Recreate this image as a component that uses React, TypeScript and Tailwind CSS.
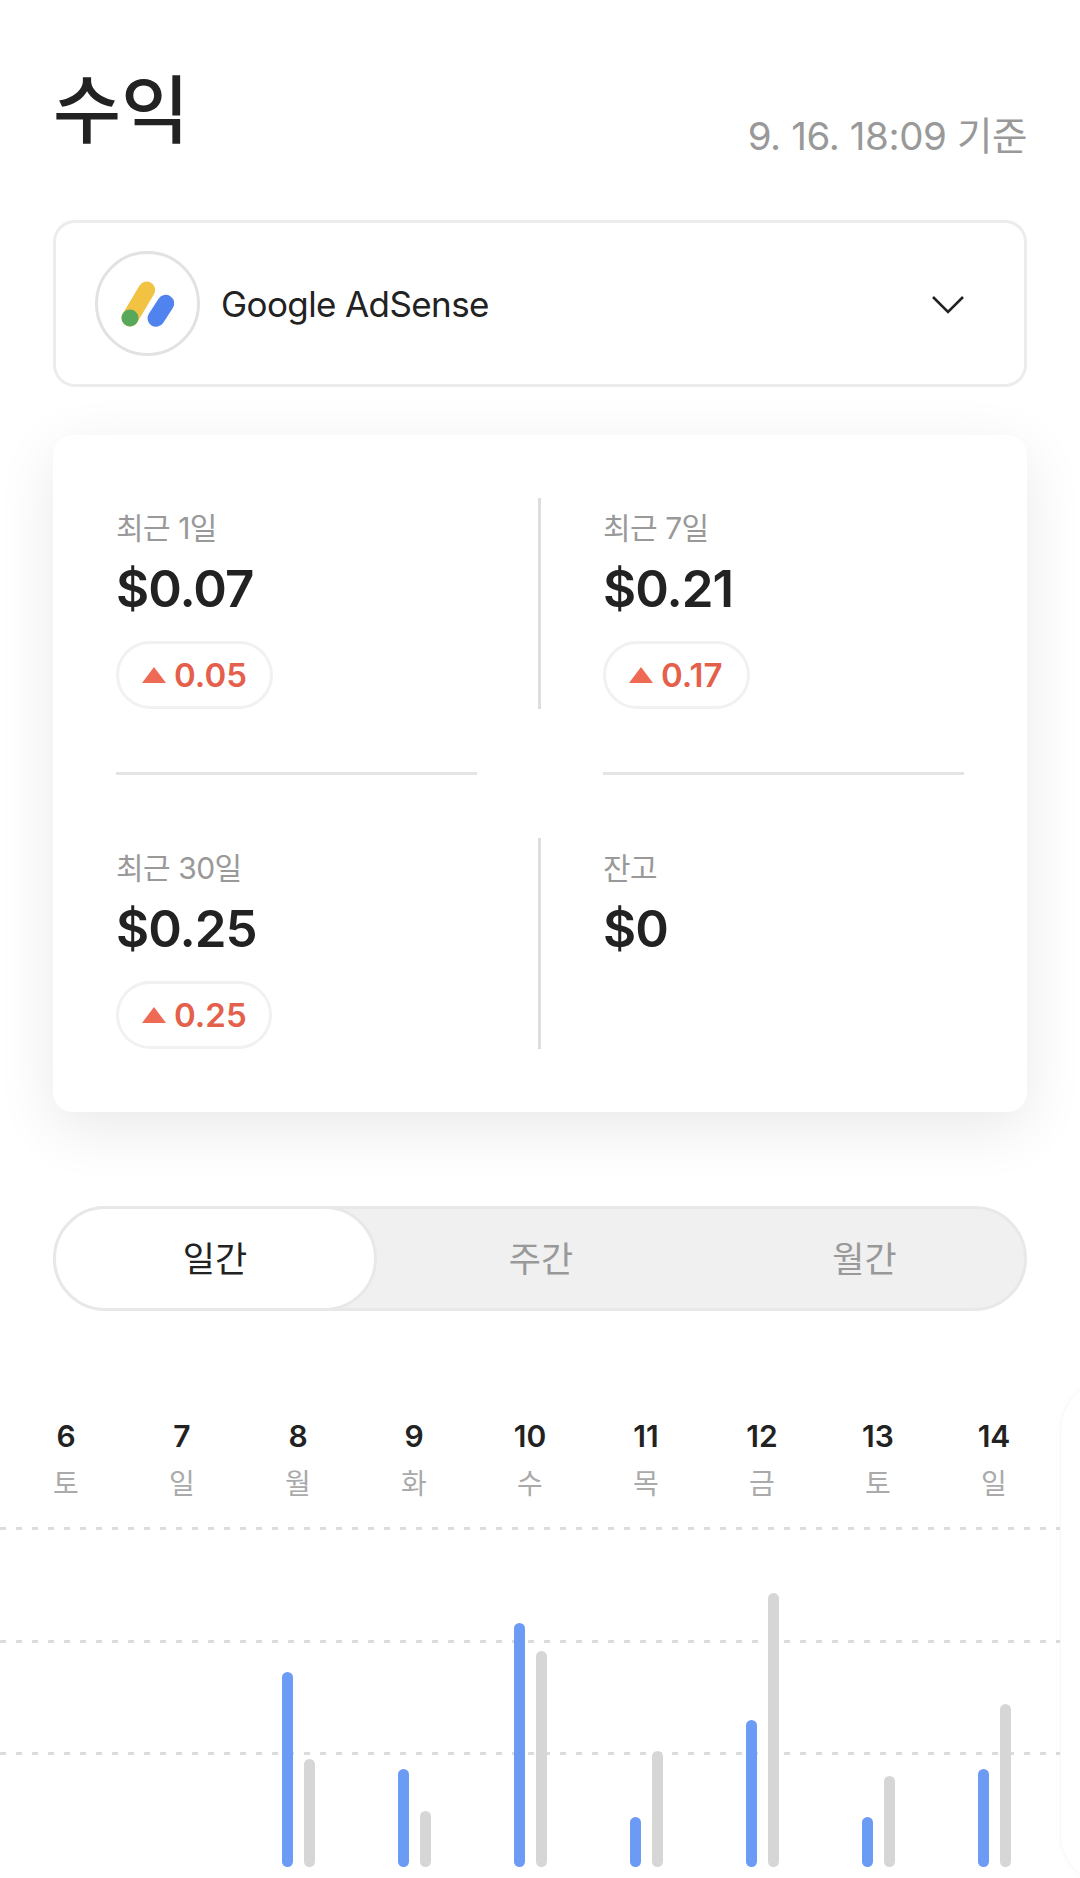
const font = "font-['Inter','Noto_Sans_CJK_KR',sans-serif]";

function Stat({ label, value, delta, pillW }: { label: string; value: string; delta?: string; pillW?: string }) {
  return (
    <div className="h-[211px] flex flex-col items-start">
      <div className="mt-[12px] text-[30px] leading-[36px] text-[#999999] tracking-[-0.5px]">{label}</div>
      <div className="mt-[12px] text-[51px] leading-[62px] font-semibold text-[#222222] tracking-[-1px]">{value}</div>
      {delta && (
        <div className={`mt-auto h-[68px] ${pillW} rounded-full border-[3px] border-[#f1f1f1] flex items-center pl-[23px] gap-[8px]`}>
          <svg width="24" height="16" viewBox="0 0 24 16"><path d="M12 0 L24 16 L0 16 Z" fill="#EE6A55" /></svg>
          <span className="text-[33px] leading-none font-semibold text-[#E4604C]">{delta}</span>
        </div>
      )}
    </div>
  );
}

const days = [
  { d: "6", w: "토", b: 0, g: 0 },
  { d: "7", w: "일", b: 0, g: 0 },
  { d: "8", w: "월", b: 195, g: 108 },
  { d: "9", w: "화", b: 98, g: 56 },
  { d: "10", w: "수", b: 244, g: 216 },
  { d: "11", w: "목", b: 50, g: 116 },
  { d: "12", w: "금", b: 147, g: 274 },
  { d: "13", w: "토", b: 50, g: 91 },
  { d: "14", w: "일", b: 98, g: 163 },
];

function DotLine() {
  return <div className="h-[3px] w-full bg-[repeating-linear-gradient(90deg,#dcdcdc_0,#dcdcdc_6px,transparent_6px,transparent_16px)]" />;
}

export default function App() {
  return (
    <div className={`${font} relative w-[1080px] h-[1878px] overflow-hidden bg-white`}>
      <div className="px-[53px] pt-[64px]">
        <div className="flex items-end justify-between h-[92px]">
          <h1 className="text-[74px] leading-[92px] font-medium text-[#222222]">수익</h1>
          <span className="text-[38.5px] leading-[44px] text-[#999999] tracking-[-0.4px] mb-[-2px]">9. 16. 18:09 기준</span>
        </div>

        <div className="mt-[64px] h-[167px] rounded-[22px] border-[3px] border-[#ececec] flex items-center pl-[39px] pr-[59px]">
          <div className="w-[105px] h-[105px] rounded-full border-[3px] border-[#e2e2e2] shrink-0">
            <svg width="99" height="99" viewBox="2 2 99 99">
              <line x1="50.7" y1="38" x2="34" y2="66" stroke="#F2C342" strokeWidth="17" strokeLinecap="round" />
              <line x1="69.7" y1="51.3" x2="60" y2="66.3" stroke="#5083EE" strokeWidth="17" strokeLinecap="round" />
              <circle cx="34" cy="66" r="8.5" fill="#57A85A" />
            </svg>
          </div>
          <span className="ml-[21px] mt-[2px] text-[35px] leading-none text-[#222222] tracking-[-0.6px]">Google AdSense</span>
          <svg className="ml-auto mt-[2px]" width="34" height="20" viewBox="0 0 34 20" fill="none">
            <path d="M2 2 L17 17 L32 2" stroke="#222222" strokeWidth="2.6" />
          </svg>
        </div>

        <div className="mt-[48px] h-[677px] rounded-[20px] bg-white shadow-[0_16px_60px_rgba(0,0,0,0.09)] px-[63px] pt-[63px]">
          <div className="grid grid-cols-[361px_126px_361px]">
            <Stat label="최근 1일" value="$0.07" delta="0.05" pillW="w-[157px]" />
            <div className="flex justify-center pr-[1px]"><div className="w-[3px] h-[211px] bg-[#dddddd]" /></div>
            <Stat label="최근 7일" value="$0.21" delta="0.17" pillW="w-[147px]" />
            <div className="h-[3px] bg-[#e4e4e4] mt-[63px] mb-[63px]" />
            <div />
            <div className="h-[3px] bg-[#e4e4e4] mt-[63px] mb-[63px]" />
            <Stat label="최근 30일" value="$0.25" delta="0.25" pillW="w-[156px]" />
            <div className="flex justify-center pr-[1px]"><div className="w-[3px] h-[211px] bg-[#dddddd]" /></div>
            <Stat label="잔고" value="$0" />
          </div>
        </div>

        <div className="mt-[94px] h-[105px] rounded-full border-[3px] border-[#e8e8e8] bg-[#f0f0f0] grid grid-cols-[321px_328px_319px] text-[35px] text-[#999999]">
          <div className="flex items-center justify-center rounded-full bg-white text-[#222222] -my-[3px] -ml-[3px] border-[3px] border-[#e8e8e8] pt-[2px]">일간</div>
          <div className="flex items-center justify-center pt-[2px]">주간</div>
          <div className="flex items-center justify-center pt-[2px]">월간</div>
        </div>
      </div>

      <div className="mt-[107px] pl-[8px]">
        <div className="grid grid-cols-[repeat(9,116px)]">
          {days.map((x, i) => (
            <div key={i} className="flex flex-col items-center">
              <span className="text-[30px] leading-[36px] font-semibold text-[#222222]">{x.d}</span>
              <span className="mt-[12px] text-[28px] leading-[36px] text-[#aaaaaa]">{x.w}</span>
            </div>
          ))}
        </div>
      </div>

      <div className="relative mt-[25px] h-[340px]">
        <div className="absolute left-0 top-0 w-[1060px] h-[228px] flex flex-col justify-between">
          <DotLine />
          <DotLine />
          <DotLine />
        </div>
        <div className="relative h-full pl-[8px] grid grid-cols-[repeat(9,116px)] items-end">
          {days.map((x, i) => (
            <div key={i} className="flex items-end justify-center gap-[11px]">
              {x.b > 0 && <div className="w-[11px] rounded-full bg-[#6B9BF4]" style={{ height: x.b }} />}
              {x.g > 0 && <div className="w-[11px] rounded-full bg-[#d6d6d6]" style={{ height: x.g }} />}
            </div>
          ))}
        </div>
      </div>

      <div className="absolute left-[1060px] top-[1380px] w-[100px] h-[505px] rounded-[70px] bg-white border border-[#f8f8f8] shadow-[0_0_10px_rgba(0,0,0,0.02)]" />
    </div>
  );
}
